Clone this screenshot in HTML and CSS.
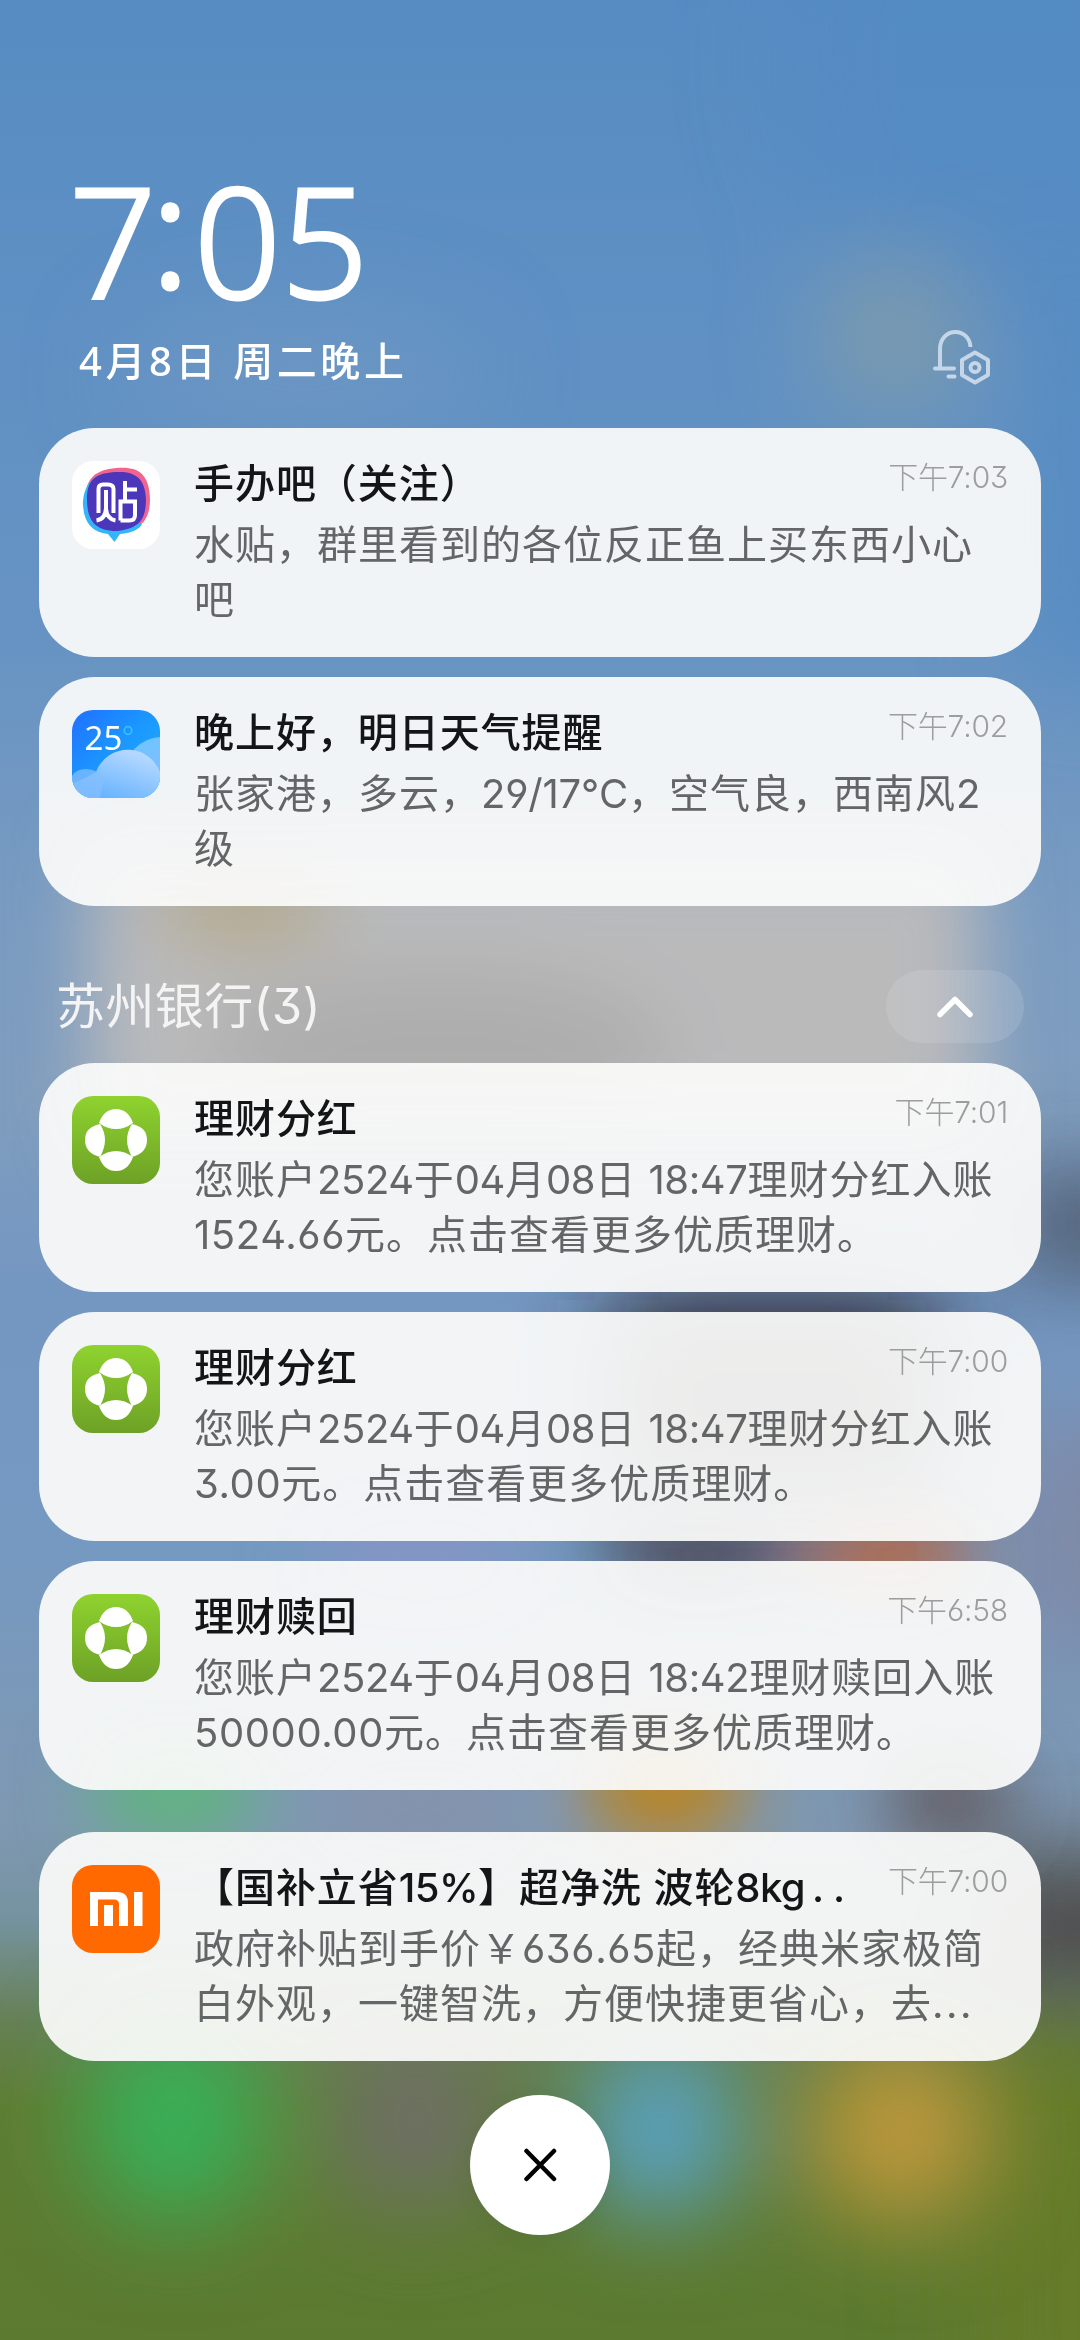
FILE: index.html
```html
<!DOCTYPE html>
<html lang="zh-CN">
<head>
<meta charset="utf-8">
<title>通知中心</title>
<link rel="stylesheet" href="styles.css">
</head>
<body>
<svg class="wallpaper" viewBox="0 0 1080 2340" preserveAspectRatio="none" aria-hidden="true">
  <defs>
    <linearGradient id="base" x1="0" y1="0" x2="0" y2="1">
      <stop offset="0" stop-color="#568cc2"/>
      <stop offset=".13" stop-color="#5f90c4"/>
      <stop offset=".27" stop-color="#6693c3"/>
      <stop offset=".40" stop-color="#7b9cc1"/>
      <stop offset=".47" stop-color="#7f9dbe"/>
      <stop offset=".55" stop-color="#7497c2"/>
      <stop offset=".66" stop-color="#7599c1"/>
      <stop offset=".78" stop-color="#7f98b2"/>
      <stop offset=".82" stop-color="#75939f"/>
      <stop offset=".865" stop-color="#678054"/>
      <stop offset=".90" stop-color="#5f7d33"/>
      <stop offset="1" stop-color="#5c7a30"/>
    </linearGradient>
    <filter id="b30" x="-100%" y="-100%" width="300%" height="300%"><feGaussianBlur stdDeviation="36"/></filter>
    <filter id="b45" x="-100%" y="-100%" width="300%" height="300%"><feGaussianBlur stdDeviation="48"/></filter>
  </defs>
  <rect width="1080" height="2340" fill="url(#base)"/>
  <g filter="url(#b45)">
    <ellipse cx="1000" cy="60" rx="220" ry="260" fill="#538bc3" opacity=".6"/>
    <rect x="1030" y="280" width="120" height="400" fill="#578cc2"/>
    <ellipse cx="895" cy="335" rx="80" ry="80" fill="#859fa8" opacity=".8"/>
    <ellipse cx="300" cy="370" rx="180" ry="60" fill="#7099c3" opacity=".7"/>
    <rect x="1010" y="1185" width="160" height="80" fill="#424955"/>
    <rect x="1020" y="1420" width="140" height="230" fill="#8088a4"/>
    <rect x="970" y="1860" width="210" height="130" fill="#4c4644"/>
    <rect x="960" y="2050" width="220" height="400" fill="#657b2c"/>
    <rect x="610" y="1300" width="330" height="195" fill="#2b2327"/>
  </g>
  <g filter="url(#b30)">
    <rect x="90" y="850" width="890" height="290" fill="#bababb"/>
    <ellipse cx="440" cy="1050" rx="230" ry="80" fill="#adadad"/>
    <ellipse cx="245" cy="905" rx="90" ry="40" fill="#b5a986"/>
    <ellipse cx="890" cy="1555" rx="90" ry="34" fill="#c9602f"/>
    <ellipse cx="700" cy="1555" rx="100" ry="32" fill="#443b42"/>
    <ellipse cx="420" cy="1560" rx="110" ry="40" fill="#8894c6"/>
    <ellipse cx="175" cy="1790" rx="85" ry="52" fill="#5fb67c"/>
    <rect x="330" y="1770" width="180" height="80" fill="#8692ab"/>
    <ellipse cx="665" cy="1785" rx="82" ry="62" fill="#ba8423"/>
    <ellipse cx="950" cy="1800" rx="65" ry="42" fill="#5e5459"/>
  </g>
  <g filter="url(#b45)">
    <ellipse cx="175" cy="2118" rx="92" ry="105" fill="#38b058"/>
    <circle cx="415" cy="2120" r="92" fill="#6e6f66"/>
    <ellipse cx="660" cy="2128" rx="82" ry="90" fill="#5aa3c6"/>
    <ellipse cx="900" cy="2132" rx="92" ry="92" fill="#be983e"/>
  </g>
</svg>

<main class="shade">
  <header class="header">
    <div>
      <div class="clock"><span class="hour">7</span><span class="colon">:</span><span>0</span><span>5</span></div>
      <div class="date">4月8日 周二晚上</div>
    </div>
    <svg class="bell" viewBox="0 0 60 58" fill="none" stroke="#c4d6e8" stroke-width="4">
      <path d="M8 39V20C8 9.500 15 3 23.500 3C31.500 3 38 9 38.500 18"/>
      <path d="M3 39.500H22M16.500 47.500H22.500" stroke-linecap="round"/>
      <path d="M43 23.500L56 31V46L43 53.500L30 46V31Z" stroke-linejoin="round"/>
      <circle cx="43" cy="38.500" r="4.500"/>
    </svg>
  </header>

  <article class="card">
    <svg class="icon" viewBox="0 0 88 88">
      <rect width="88" height="88" rx="21" fill="#fff"/>
      <path d="M44 7C66 5 77 12 78 38C78 60 68 68 50 71H36C20 68 12 60 13 38C14 16 24 9 44 7Z" fill="#f0648f"/>
      <path d="M26 15C14 20 11 34 11 44C12 62 20 71 36 73L42.500 81L48 73C60 72 68 68 70 63L30 60Z" fill="#33b4fb"/>
      <path d="M44 11C62 10 73 16 74 38C74 60 66 68 44 70C22 70 15 58 15 38C15 18 24 12 44 11Z" fill="#4c36b9"/>
      <g fill="none" stroke="#fff" stroke-width="4">
        <path d="M26.500 52V28Q26.500 23.500 31 23.500H36Q41.500 23.500 41.500 28V52M34 29V46Q34 58 24.500 59.500M34 48Q35 58 43.500 59.500"/>
        <path d="M53 20V40M53 28.500H65M48.500 59.500V40.500H63V54Q63 59.500 57.500 59.500H48.500"/>
      </g>
    </svg>
    <div class="content">
      <div class="top"><h2>手办吧（关注）</h2><time>下午7:03</time></div>
      <p>水贴，群里看到的各位反正鱼上买东西小心<br>吧</p>
    </div>
  </article>

  <article class="card">
    <svg class="icon" viewBox="0 0 88 88">
      <defs>
        <clipPath id="wclip"><rect width="88" height="88" rx="21"/></clipPath>
        <linearGradient id="sky" x1="0" y1="0" x2="1" y2="1"><stop offset="0" stop-color="#2070ff"/><stop offset=".5" stop-color="#1b99ff"/><stop offset="1" stop-color="#27b2ff"/></linearGradient>
        <linearGradient id="cl1" x1=".3" y1="0" x2=".6" y2="1"><stop offset="0" stop-color="#6fc4ff"/><stop offset="1" stop-color="#8fb6ff"/></linearGradient>
        <linearGradient id="cl2" x1=".6" y1="0" x2=".1" y2=".8"><stop offset="0" stop-color="#b4d8ff"/><stop offset="1" stop-color="#66b3ff"/></linearGradient>
      </defs>
      <g clip-path="url(#wclip)">
        <rect width="88" height="88" fill="url(#sky)"/>
        <circle cx="90" cy="65" r="38" fill="url(#cl1)"/>
        <path d="M24 62A34 34 0 0 1 89 66V90H0V74Q18 66 24 62Z" fill="url(#cl2)"/>
        <path d="M0 66Q4 59 14 59Q26 59 32 69L28 88H0Z" fill="#84bfff" opacity=".75"/>
      </g>
      <text class="temp" x="12.500" y="40">25</text>
      <circle cx="56" cy="20.500" r="3.800" fill="none" stroke="#35c0ff" stroke-width="1.800"/>
    </svg>
    <div class="content">
      <div class="top"><h2>晚上好，明日天气提醒</h2><time>下午7:02</time></div>
      <p>张家港，多云，<span class="temps">29/17°C</span>，空气良，西南风2<br>级</p>
    </div>
  </article>

  <section class="group">
    <div class="group-head">
      <h1>苏州银行(3)</h1>
      <div class="collapse"><svg viewBox="0 0 36 22"><path d="M3 18.500L18 3.500L33 18.500" fill="none" stroke="#fff" stroke-width="5.500" stroke-linecap="round" stroke-linejoin="round"/></svg></div>
    </div>

    <article class="card">
      <svg class="icon" viewBox="0 0 88 88">
        <defs><linearGradient id="leaf" x1="0" y1="0" x2="0" y2="1"><stop offset="0" stop-color="#8fd32f"/><stop offset="1" stop-color="#6da126"/></linearGradient></defs>
        <g id="bank"><rect width="88" height="88" rx="21" fill="url(#leaf)"/>
        <path fill="#fff" d="M27 27Q32 13 44 13Q56 13 61 27Q53 33 44 33Q35 33 27 27ZM27 61Q32 75 44 75Q56 75 61 61Q53 55 44 55Q35 55 27 61ZM28 28Q33 36 33 44Q33 52 28 61Q13 57 13 44Q13 31 28 28ZM60 28Q55 36 55 44Q55 52 60 61Q75 57 75 44Q75 31 60 28Z"/></g>
      </svg>
      <div class="content">
        <div class="top"><h2>理财分红</h2><time>下午7:01</time></div>
        <p>您账户<span class="num">2524</span>于<span class="num">04</span>月<span class="num">08</span>日 <span class="num">18:47</span>理财分红入账<br><span class="amount">1524.66</span>元。点击查看更多优质理财。</p>
      </div>
    </article>

    <article class="card">
      <svg class="icon" viewBox="0 0 88 88"><use href="#bank"/></svg>
      <div class="content">
        <div class="top"><h2>理财分红</h2><time>下午7:00</time></div>
        <p>您账户<span class="num">2524</span>于<span class="num">04</span>月<span class="num">08</span>日 <span class="num">18:47</span>理财分红入账<br><span class="amount">3.00</span>元。点击查看更多优质理财。</p>
      </div>
    </article>

    <article class="card">
      <svg class="icon" viewBox="0 0 88 88"><use href="#bank"/></svg>
      <div class="content">
        <div class="top"><h2>理财赎回</h2><time>下午6:58</time></div>
        <p>您账户<span class="num">2524</span>于<span class="num">04</span>月<span class="num">08</span>日 <span class="num">18:42</span>理财赎回入账<br><span class="amount">50000.00</span>元。点击查看更多优质理财。</p>
      </div>
    </article>
  </section>

  <article class="card promo">
    <svg class="icon" viewBox="0 0 88 88">
      <rect width="88" height="88" rx="21" fill="#ff6900"/>
      <path fill="#fff" d="M18 27H45Q56 27 56 38V61H47V39Q47 34.500 42 34.500H26V61H18ZM32 40H41V61H32ZM62 27H70.500V61H62Z"/>
    </svg>
    <div class="content">
      <div class="top"><h2>【国补立省<span class="tight">15%</span>】超净洗 波轮<span class="tight">8kg</span><span class="dots">..</span></h2><time>下午7:00</time></div>
      <p>政府补贴到手价￥<span class="amount">636.65</span>起，经典米家极简<br>白外观，一键智洗，方便快捷更省心，去<span class="more">...</span></p>
    </div>
  </article>

  <div class="clear"><svg viewBox="0 0 34 34"><path d="M3.500 3L31 31M31 3L3.500 31" fill="none" stroke="#000" stroke-width="4.500" stroke-linecap="round"/></svg></div>
</main>
</body>
</html>
```

FILE: styles.css
```css
* { box-sizing: border-box; margin: 0; padding: 0; }

body {
  width: 1080px;
  height: 2340px;
  overflow: hidden;
  font-family: Inter, "Noto Sans CJK SC", sans-serif;
  font-feature-settings: "ss01" 1, "calt" 0;
  text-autospace: no-autospace;
  text-spacing-trim: space-all;
}

svg { display: block; }

.wallpaper {
  position: absolute;
  inset: 0;
  width: 1080px;
  height: 2340px;
  z-index: -1;
}

.shade {
  height: 2340px;
  padding: 0 39px;
  display: flex;
  flex-direction: column;
}

.header {
  height: 428px;
  flex: none;
  display: flex;
  justify-content: space-between;
  padding: 157px 49px 0 30px;
  color: #fff;
  font-family: "Noto Sans", "Noto Sans CJK SC", sans-serif;
}

.clock {
  height: 164px;
  display: flex;
  font-size: 153px;
  line-height: 164px;
  font-weight: 300;
  -webkit-text-stroke: 3px #fff;
}

.clock .hour { letter-spacing: -5px; }

.clock .colon {
  line-height: 142px;
  margin-right: 5px;
  -webkit-text-stroke-width: 5px;
}

.date {
  padding-left: 10px;
  margin-top: 13px;
  font-size: 40px;
  line-height: 54px;
  letter-spacing: 3.6px;
  font-weight: 500;
  white-space: nowrap;
}

.bell { width: 60px; height: 58px; margin-top: 172px; }

.card {
  height: 229px;
  flex: none;
  margin-bottom: 20px;
  padding: 33px 33px 0 33px;
  border-radius: 56px;
  background: rgba(251, 251, 250, .935);
  display: flex;
  gap: 34px;
}

.icon { width: 88px; height: 88px; flex: none; }

.temp { font-size: 33px; fill: #fff; font-family: "Noto Sans", sans-serif; }

.content { flex: 1; min-width: 0; }

.top {
  display: flex;
  justify-content: space-between;
  height: 55px;
  margin-top: -6px;
}

h2 {
  padding-top: 1px;
  font-size: 40px;
  line-height: 55px;
  font-weight: 500;
  letter-spacing: .95px;
  color: #141516;
  white-space: nowrap;
}

time {
  font-size: 30px;
  line-height: 44px;
  font-weight: 300;
  letter-spacing: -.2px;
  color: #9c9d9f;
  white-space: nowrap;
}

p {
  margin-top: 7px;
  font-size: 40px;
  line-height: 55px;
  font-weight: 400;
  letter-spacing: 1px;
  color: #646566;
  white-space: nowrap;
}

.num { letter-spacing: -.4px; }
.temps { letter-spacing: -.2px; }
.amount { letter-spacing: .6px; }
.tight { letter-spacing: -.6px; }
.dots { letter-spacing: 9px; margin-left: 7px; }
.more { letter-spacing: 2.5px; }

.group-head {
  height: 137px;
  display: flex;
  justify-content: space-between;
  padding: 44px 17px 0 17px;
}

h1 {
  padding-top: 1px;
  font-size: 49px;
  line-height: 72px;
  font-weight: 400;
  letter-spacing: .4px;
  color: #f4f4f5;
}

.collapse {
  width: 138px;
  height: 73px;
  border-radius: 37px;
  background: rgba(255, 255, 255, .11);
  display: flex;
  align-items: center;
  justify-content: center;
}

.collapse svg { width: 36px; height: 22px; }

.promo { margin-top: 22px; margin-bottom: 34px; }

.clear {
  width: 140px;
  height: 140px;
  flex: none;
  align-self: center;
  border-radius: 50%;
  background: #fff;
  box-shadow: 0 4px 24px rgba(0, 0, 0, .06);
  display: flex;
  align-items: center;
  justify-content: center;
}

.clear svg { width: 34px; height: 34px; }
```
